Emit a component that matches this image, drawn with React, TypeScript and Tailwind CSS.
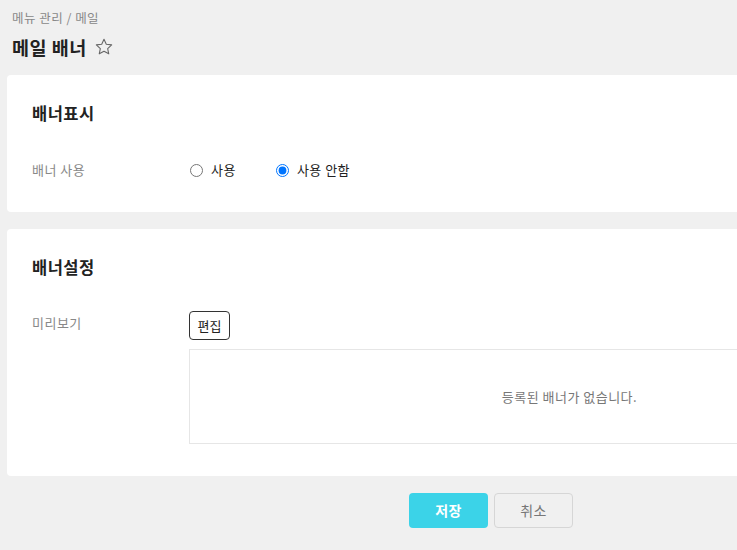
import React from 'react'

const font = { fontFamily: '"Noto Sans CJK KR", "Noto Sans", sans-serif' }

function StarIcon() {
  return (
    <svg width="20" height="20" viewBox="0 0 24 24" fill="none" stroke="#666" strokeWidth="1.3" strokeLinejoin="round">
      <path d="M12 2.8l2.75 5.9 6.45.75-4.8 4.4 1.3 6.35L12 17.05 6.3 20.2l1.3-6.35-4.8-4.4 6.45-.75z" />
    </svg>
  )
}

function Radio({ label, checked }: { label: string; checked?: boolean }) {
  return (
    <label className="flex items-center gap-2 text-[13px] leading-5 text-[#222]">
      <input type="radio" name="banner-use" defaultChecked={checked} className="m-0 h-[13px] w-[13px]" />
      {label}
    </label>
  )
}

export default function App() {
  return (
    <div className="h-[550px] w-[737px] overflow-hidden bg-[#f0f0f0] tracking-[0.03em]" style={font}>
      <div className="w-[982px] px-[7px]">
        <div className="pl-[5px] pt-[10px]">
          <p className="text-[12.5px] leading-4 text-[#888]">메뉴 관리 / 메일</p>
          <div className="mt-[8px] flex items-center gap-[7px]">
            <h1 className="text-[18.5px] font-bold leading-[26px] text-[#222]">메일 배너</h1>
            <StarIcon />
          </div>
        </div>

        <section className="mt-[15px] rounded-[4px] bg-white px-[25px] pb-[32px] pt-[26px]">
          <h2 className="text-[16.5px] font-bold leading-6 text-[#222]">배너표시</h2>
          <div className="mt-[35px] flex">
            <div className="w-[157px] text-[13px] leading-5 text-[#888]">배너 사용</div>
            <div className="flex items-center gap-[40px] pl-px">
              <Radio label="사용" />
              <Radio label="사용 안함" checked />
            </div>
          </div>
        </section>

        <section className="mt-[17px] rounded-[4px] bg-white px-[25px] pb-[32px] pt-[26px]">
          <h2 className="text-[16.5px] font-bold leading-6 text-[#222]">배너설정</h2>
          <div className="mt-[32px] flex">
            <div className="w-[157px] pt-[2px] text-[13px] leading-5 text-[#888]">미리보기</div>
            <div className="flex-1">
              <button className="h-[29px] w-[41px] rounded-[4px] border border-[#333] bg-white text-[13px] tracking-normal text-[#222]">
                편집
              </button>
              <div className="mt-[9px] flex h-[95px] items-center justify-center border border-[#e6e6e6] text-[13px] text-[#777]">
                등록된 배너가 없습니다.
              </div>
            </div>
          </div>
        </section>

        <div className="mt-[17px] flex justify-center gap-[6px]">
          <button className="h-[35px] w-[79px] rounded-[4px] bg-[#3bd3e8] text-[14px] font-bold text-white">저장</button>
          <button className="h-[35px] w-[79px] rounded-[4px] border border-[#d6d6d6] bg-[#f0f0f0] text-[14px] text-[#777]">
            취소
          </button>
        </div>
      </div>
    </div>
  )
}
